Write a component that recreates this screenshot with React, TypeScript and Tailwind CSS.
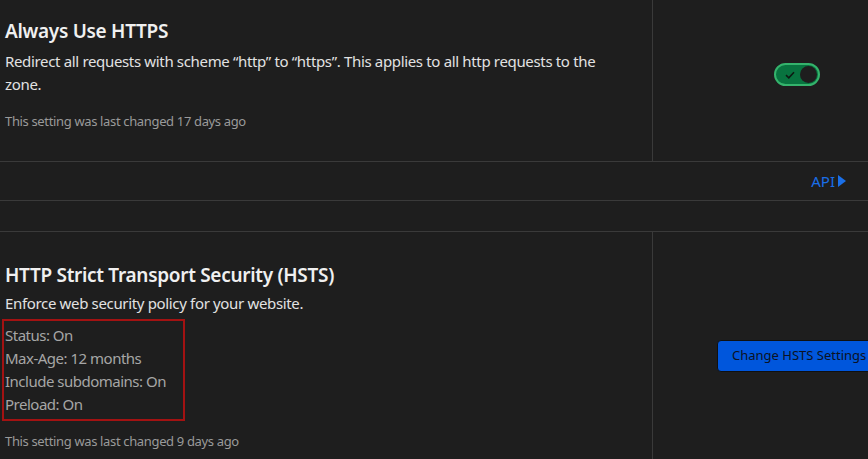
import React from 'react';

const font = { fontFamily: '"Noto Sans", "Open Sans", sans-serif' };

const Toggle: React.FC = () => (
  <div className="relative h-[23px] w-[46px] rounded-full border-2 border-[#34b36c] bg-[#08733f]">
    <svg className="absolute left-[9px] top-[6px]" width="10" height="8" viewBox="0 0 10 8" fill="none">
      <path d="M1 4.2 L3.8 6.8 L9 1.2" stroke="#0d1a12" strokeWidth="1.6" />
    </svg>
    <div className="absolute right-[1px] top-[1px] h-[17px] w-[17px] rounded-full bg-[#1e1e1e]" />
  </div>
);

const App: React.FC = () => {
  return (
    <div className="h-[459px] w-[868px] overflow-hidden bg-[#1e1e1e] text-[#e6e6e6]" style={font}>
      {/* Always Use HTTPS */}
      <div className="flex h-[162px] border-b border-[#3a3a3a]">
        <div className="w-[653px] shrink-0 border-r border-[#3a3a3a] pl-[5px] pt-[17px]">
          <h3 className="text-[19px] font-semibold leading-[28px] tracking-[-0.3px] text-[#f0f0f0]">Always Use HTTPS</h3>
          <p className="mt-[5px] w-[620px] text-[15px] leading-[23px] tracking-[-0.34px] text-[#e2e2e2]">
            Redirect all requests with scheme “http” to “https”. This applies to all http requests to the zone.
          </p>
          <p className="mt-[16px] text-[13px] leading-[18px] tracking-[-0.35px] text-[#9a9a9a]">
            This setting was last changed 17 days ago
          </p>
        </div>
        <div className="flex min-w-0 flex-1 justify-end pr-[48px] pt-[63px]">
          <Toggle />
        </div>
      </div>

      {/* API row */}
      <div className="flex h-[39px] items-center justify-end border-b border-[#3a3a3a] pr-[22px]">
        <a className="flex items-center gap-[3px] text-[15px] text-[#1a6fe8]">
          API
          <svg width="8" height="12" viewBox="0 0 8 12">
            <path d="M0 0 L8 6 L0 12 Z" fill="#1a6fe8" />
          </svg>
        </a>
      </div>

      <div className="h-[31px] border-b border-[#3a3a3a]" />

      {/* HSTS */}
      <div className="flex h-[228px]">
        <div className="w-[653px] shrink-0 border-r border-[#3a3a3a] pl-[5px] pt-[29px]">
          <h3 className="text-[19px] font-semibold leading-[28px] tracking-[-0.3px] text-[#f0f0f0]">
            HTTP Strict Transport Security (HSTS)
          </h3>
          <p className="mt-[3px] text-[15px] leading-[23px] tracking-[-0.34px] text-[#e2e2e2]">
            Enforce web security policy for your website.
          </p>
          <div className="-ml-[3px] mt-[4px] w-[183px] border-2 border-[#a31212] pb-[3px] pl-[1px] pt-[3px] text-[15px] leading-[23px] tracking-[-0.5px] text-[#a6a6a6]">
            <p>Status: On</p>
            <p>Max-Age: 12 months</p>
            <p>Include subdomains: On</p>
            <p>Preload: On</p>
          </div>
          <p className="mt-[11px] text-[13px] leading-[18px] tracking-[-0.35px] text-[#9a9a9a]">
            This setting was last changed 9 days ago
          </p>
        </div>
        <div className="min-w-0 flex-1 overflow-hidden pl-[64px] pt-[108px]">
          <button className="h-[32px] w-[170px] whitespace-nowrap rounded-[4px] border border-[#101010] bg-[#0056dc] pl-[14px] text-left text-[13px] text-[#0c1224]">
            Change HSTS Settings
          </button>
        </div>
      </div>
    </div>
  );
};

export default App;
